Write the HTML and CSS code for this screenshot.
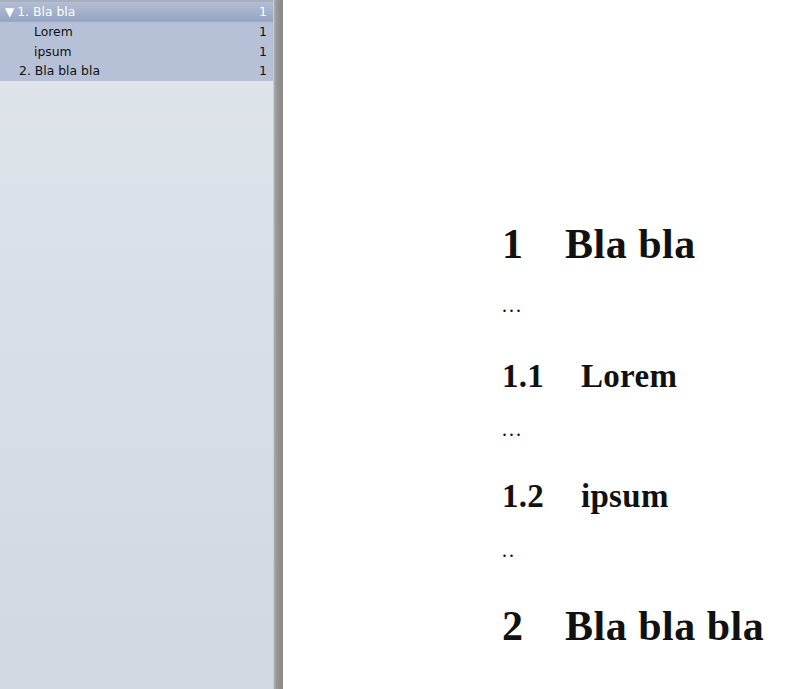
FILE: index.html
```html
<!DOCTYPE html>
<html>
<head>
<meta charset="utf-8">
<link rel="stylesheet" href="styles.css">
</head>
<body>
<div class="app">
  <aside class="sidebar">
    <div class="outline">
      <div class="row head"><span class="label"><span class="tri">▼</span>1. Bla bla</span><span class="pg">1</span></div>
      <div class="row sub"><span class="label">Lorem</span><span class="pg">1</span></div>
      <div class="row sub"><span class="label">ipsum</span><span class="pg">1</span></div>
      <div class="row top"><span class="label">2. Bla bla bla</span><span class="pg">1</span></div>
    </div>
  </aside>
  <div class="splitter"></div>
  <main class="page">
    <h1 class="sec s1"><span class="num">1</span><span>Bla bla</span></h1>
    <p class="txt t1">...</p>
    <h2 class="subsec ss1"><span class="num">1.1</span><span>Lorem</span></h2>
    <p class="txt t2">...</p>
    <h2 class="subsec ss2"><span class="num">1.2</span><span>ipsum</span></h2>
    <p class="txt t3">..</p>
    <h1 class="sec s2"><span class="num">2</span><span>Bla bla bla</span></h1>
  </main>
</div>
</body>
</html>
```
FILE: styles.css
```css
html, body {
  margin: 0;
  padding: 0;
  width: 800px;
  height: 689px;
  overflow: hidden;
  background: #ffffff;
}
.app {
  display: flex;
  height: 689px;
}
.sidebar {
  width: 273px;
  flex: none;
  background: linear-gradient(#e0e5ec, #d1d8e0);
  border-top: 2px solid #a8b0bd;
  box-sizing: border-box;
  font-family: "DejaVu Sans", sans-serif;
  font-size: 12.4px;
}
.outline {
  display: flex;
  flex-direction: column;
}
.row {
  display: flex;
  justify-content: space-between;
  align-items: center;
  height: 19.5px;
  padding-right: 6px;
  background: #b6c0d6;
  color: #111;
}
.row.head {
  height: 19px;
  background: linear-gradient(#b3bed5, #95a5c3);
  color: #ffffff;
  border-bottom: 1px solid #9aa8c4;
  padding-left: 5px;
}
.row.sub { padding-left: 34px; }
.row.top { padding-left: 19px; }
.tri {
  font-size: 12px;
  margin-right: 3px;
}
.splitter {
  width: 10px;
  flex: none;
  border-left: 1px solid #c9cdd3;
  background: linear-gradient(90deg, #b0b0b0 0, #9a9a9a 2px, #8d8d8d 6px, #888 10px);
  box-sizing: border-box;
}
.page {
  flex: 1;
  padding-left: 219px;
  font-family: "Liberation Serif", serif;
  color: #111;
}
.sec, .subsec, .txt {
  margin: 0;
  display: flex;
}
.sec {
  font-size: 42px;
  line-height: 42px;
  font-weight: bold;
  letter-spacing: 0.5px;
}
.sec .num { width: 63px; flex: none; }
.subsec {
  font-size: 33px;
  line-height: 33px;
  font-weight: bold;
  letter-spacing: 0.3px;
}
.subsec .num { width: 79px; flex: none; }
.txt {
  font-size: 20px;
  line-height: 20px;
  letter-spacing: 2px;
}
.s1 { margin-top: 223px; }
.t1 { margin-top: 30px; }
.ss1 { margin-top: 45px; }
.t2 { margin-top: 26px; }
.ss2 { margin-top: 41px; }
.t3 { margin-top: 27px; }
.s2 { margin-top: 45px; }
```
